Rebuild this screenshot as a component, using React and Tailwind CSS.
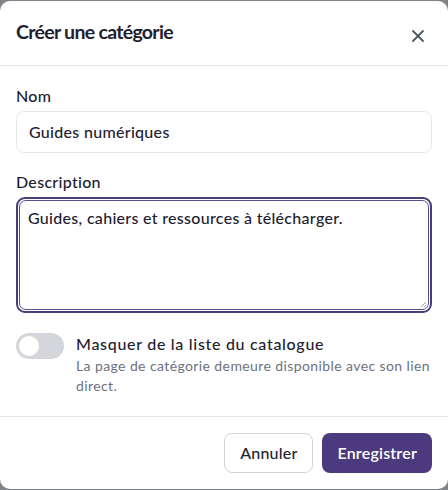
import React from "react";

export default function App() {
  return (
    <div className="w-[448px] h-[490px] bg-[#808489] pt-px overflow-hidden" style={{ fontFamily: "Lato, 'Noto Sans', sans-serif" }}>
      <div className="bg-white rounded-[10px] h-[488px] flex flex-col text-[#1e2130]">
        <div className="flex items-start justify-between pl-4 pr-[23px] h-[65px] border-b border-[#e5e7eb]">
          <h2 className="pt-[17px] text-[19.5px] leading-[28px] font-bold tracking-[-0.7px]">Créer une catégorie</h2>
          <svg width="14" height="14" viewBox="0 0 14 14" className="mt-[28px] text-[#4b5563]">
            <path d="M2 2L12 12M12 2L2 12" stroke="currentColor" strokeWidth="1.8" strokeLinecap="round" />
          </svg>
        </div>
        <div className="px-4 pt-[20px] flex flex-col tracking-[0.3px]">
          <label className="text-[16px] font-medium leading-[20px]">Nom</label>
          <div className="mt-[5px] h-[42px] border border-[#e5e7eb] rounded-lg flex items-center px-3 text-[16px] font-medium">
            Guides numériques
          </div>
          <label className="mt-[19px] text-[16px] font-medium leading-[20px]">Description</label>
          <div className="mt-[5px] h-[116px] rounded-[9px] border-2 border-[#4b3c7e] p-px">
            <div className="relative h-full rounded-[7px] border border-[#5a4d88] pl-[8px] pt-[5px] text-[16px] font-medium">
              Guides, cahiers et ressources à télécharger.
              <svg width="7" height="7" viewBox="0 0 7 7" className="absolute right-[1px] bottom-[1px] text-[#9ca3af]">
                <path d="M6 1L1 6M6 4L4 6" stroke="currentColor" strokeWidth="1" />
              </svg>
            </div>
          </div>
          <div className="mt-[20px] flex gap-3">
            <div className="w-12 h-[26px] rounded-full bg-[#d4d6db] p-[3px] shrink-0">
              <div className="w-5 h-5 rounded-full bg-white" />
            </div>
            <div className="flex flex-col">
              <span className="text-[16px] font-medium leading-[22px] tracking-[0.7px]">Masquer de la liste du catalogue</span>
              <span className="mt-[1px] text-[14px] leading-[20px] tracking-[0.4px] text-[#6b7280]">La page de catégorie demeure disponible avec son lien direct.</span>
            </div>
          </div>
        </div>
        <div className="mt-auto border-t border-[#e5e7eb] h-[73px] flex items-center justify-end gap-[9px] px-4 tracking-[0.2px]">
          <button className="h-[40px] px-[15px] rounded-lg border border-[#d1d5db] text-[16px] font-medium">Annuler</button>
          <button className="h-[40px] px-[15px] rounded-lg bg-[#4b3a7e] text-white text-[16px] font-semibold">Enregistrer</button>
        </div>
      </div>
    </div>
  );
}
